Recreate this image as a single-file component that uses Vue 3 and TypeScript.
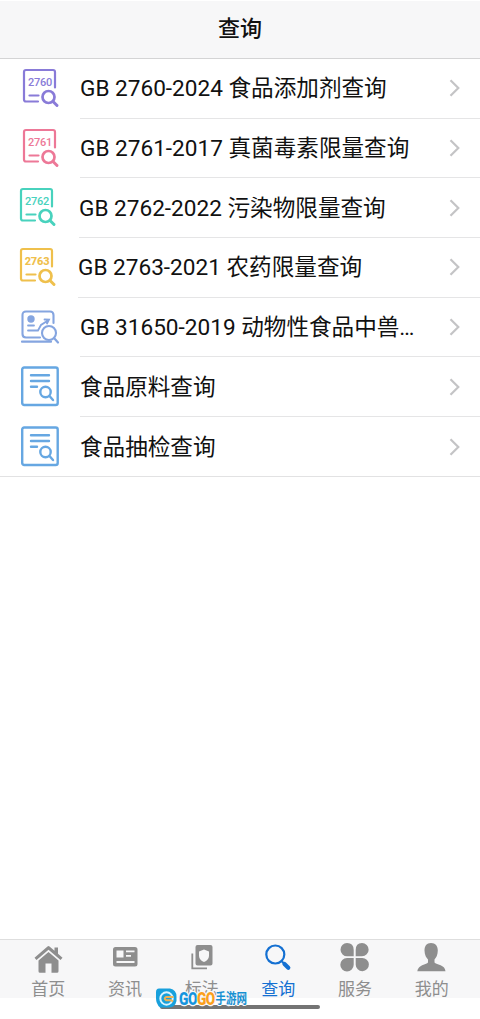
<script setup lang="ts">
interface Entry {
  label: string
  kind: 'code' | 'chart' | 'doc'
  code?: string
  color: string
  icon: number
  text: number
}

const entries: Entry[] = [
  { label: 'GB 2760-2024 食品添加剂查询', kind: 'code', code: '2760', color: '#897bd8', icon: 21, text: 80 },
  { label: 'GB 2761-2017 真菌毒素限量查询', kind: 'code', code: '2761', color: '#ed7897', icon: 21, text: 80 },
  { label: 'GB 2762-2022 污染物限量查询', kind: 'code', code: '2762', color: '#48d2bd', icon: 18, text: 79 },
  { label: 'GB 2763-2021 农药限量查询', kind: 'code', code: '2763', color: '#efc04c', icon: 18, text: 78 },
  { label: 'GB 31650-2019 动物性食品中兽…', kind: 'chart', color: '#85a5e0', icon: 20, text: 80 },
  { label: '食品原料查询', kind: 'doc', color: '#66a7e2', icon: 20, text: 80 },
  { label: '食品抽检查询', kind: 'doc', color: '#66a7e2', icon: 20, text: 80 },
]

const tabs = ['首页', '资讯', '标法', '查询', '服务', '我的']
const active = 3
</script>

<template>
  <div class="screen">
    <header class="title">查询</header>

    <main class="list">
      <div v-for="e in entries" :key="e.label" class="row">
        <div class="lead" :style="{ width: e.text + 'px', paddingLeft: e.icon + 'px', color: e.color }">
          <svg v-if="e.kind === 'code'" width="40" height="42" viewBox="0 0 40 42" fill="none" stroke="currentColor" stroke-width="2.200" stroke-linecap="round">
            <path d="M34 20.500V5Q34 3 32 3H5Q3 3 3 5V32.500Q3 34.500 5 34.500H17" />
            <path d="M8.500 28.500H17.500" />
            <circle cx="27.500" cy="30" r="6" stroke-width="2.700" />
            <path d="M32 34.500L36 38.500" stroke-width="3" />
            <text x="19" y="19.300" text-anchor="middle" class="code" :class="{ heavy: e.code === '2763' }">{{ e.code }}</text>
          </svg>
          <svg v-else-if="e.kind === 'chart'" width="40" height="42" viewBox="0 0 40 42" fill="none" stroke="currentColor" stroke-width="2.100" stroke-linecap="round">
            <path d="M33.500 17V9Q33.500 5.500 30 5.500H6Q2.500 5.500 2.500 9V28Q2.500 31.500 6 31.500H20" />
            <circle cx="11" cy="13" r="3.700" fill="currentColor" stroke="none" />
            <path d="M8 19.500H14M8 24.500H18L21 19L28 14.500M24.500 13.500L29 13.700L27 17.500" stroke-width="1.800" />
            <circle cx="29" cy="27" r="7" />
            <path d="M34 32L38 36.500M2 35.700H31" stroke-width="2.200" />
          </svg>
          <svg v-else width="40" height="42" viewBox="0 0 40 42" fill="none" stroke="currentColor" stroke-width="2.400" stroke-linecap="round">
            <rect x="2.200" y="2.500" width="35.500" height="37.500" rx="2" />
            <path d="M11 10.300H29M11 16H29M11 21.700H17" stroke-width="2.400" />
            <circle cx="25.500" cy="27" r="5.200" />
            <path d="M29.500 31L33 35" />
          </svg>
        </div>
        <div class="body">
          <span class="label">{{ e.label }}</span>
          <svg class="arrow" width="12" height="18" viewBox="0 0 12 18" fill="none" stroke="#c4c4c6" stroke-width="2.200">
            <path d="M1.500 1.200L9.300 9L1.500 16.800" />
          </svg>
        </div>
      </div>
    </main>

    <nav class="tabs">
      <div v-for="(t, i) in tabs" :key="t" class="tab" :class="{ active: i === active }">
        <svg width="32" height="32" viewBox="0 0 32 32" fill="currentColor">
          <template v-if="i === 0">
            <path d="M15.500 5.500Q16.500 4.500 17.500 5.500L22.500 9.700V6.500H26V12.700L30.500 16.700L28.500 19L16.500 8.800L4.500 19L2.500 16.700Z" />
            <path d="M16.500 11L26.500 19.500V30.200Q26.500 31.700 25 31.700H19.500V22.500H13.500V31.700H8Q6.500 31.700 6.500 30.200V19.500Z" />
          </template>
          <path v-else-if="i === 1" fill-rule="evenodd" d="M6.500 6H26Q28.500 6 28.500 8.500V23Q28.500 25.500 26 25.500H6.500Q4 25.500 4 23V8.500Q4 6 6.500 6ZM7.500 9.500V16.500H14.500V9.500ZM17 9.500V11.300H25.500V9.500ZM17 14V15.800H22V14ZM7.500 20V22H25.500V20Z" />
          <template v-else-if="i === 2">
            <path fill-rule="evenodd" d="M11.500 4H24.500Q26.500 4 26.500 6V22.500Q26.500 24.500 24.500 24.500H11.500Q9.500 24.500 9.500 22.500V6Q9.500 4 11.500 4ZM18 8.500L13 10.500V15Q13.300 19 18 21Q22.700 19 23 15V10.500Z" />
            <path d="M6.300 12.500V27.300H21" fill="none" stroke="currentColor" stroke-width="1.800" />
          </template>
          <template v-else-if="i === 3">
            <circle cx="13.300" cy="13.500" r="9" fill="none" stroke="currentColor" stroke-width="2.200" />
            <path d="M20 20.500L22 22.500" stroke="currentColor" stroke-width="2" />
            <path d="M22.500 23L26.300 26.700" stroke="currentColor" stroke-width="4.200" stroke-linecap="round" />
          </template>
          <path v-else-if="i === 4" d="M8 2Q14.700 2 14.700 9V15.300H8.300A6.650 6.650 0 0 1 8 2ZM23 2Q16.700 2 16.700 9V15.300H23A6.650 6.650 0 0 0 23 2ZM8 17H14.700V23.700A6.700 6.700 0 1 1 8 17ZM23 17H16.700V23.700A6.600 6.600 0 1 0 23 17Z" />
          <path v-else d="M15 2C10.500 2 8.500 5 8.500 9.500C8.500 14 10.500 17 12 18.500V21.500C10 23.500 5 24 3 26.500Q1.500 28 1.300 30.300H29.500Q29.200 28 28 26.500C26 24 20.500 23.500 18.500 21.500V18.500C20 17 21.800 14 21.800 9.500C21.800 5 19.500 2 15 2Z" />
        </svg>
        <span>{{ t }}</span>
      </div>
    </nav>

    <div class="home-bar"></div>
    <svg class="mark" width="100" height="26" viewBox="0 0 100 26">
      <path d="M4 1.500H15Q21.500 3 21.500 9.500V14Q20 20.500 14 20.500H5Q1 17 1 11V5Q1 1.500 4 1.500Z" fill="#18a0dc" />
      <circle cx="11.500" cy="11.500" r="6.200" fill="none" stroke="#d9f4ff" stroke-width="2" />
      <path d="M18.500 10H11Q8.500 11.500 11 13.200H16L18 14.500" fill="none" stroke="#f0b052" stroke-width="2" />
      <g transform="translate(24 17.500) scale(0.720 1)">
        <text class="latin"><tspan fill="#1594de">GO</tspan><tspan fill="#fba01c">GO</tspan></text>
      </g>
      <text x="60.500" y="16" class="han" textLength="31.500" lengthAdjust="spacingAndGlyphs">手游网</text>
    </svg>
  </div>
</template>

<style>
body {
  margin: 0;
  background: #fff;
}
</style>

<style scoped>
.screen {
  position: relative;
  display: flex;
  flex-direction: column;
  box-sizing: border-box;
  width: 480px;
  height: 1019px;
  padding-top: 1px;
  overflow: hidden;
  background: #fff;
  font-family: Roboto, "Noto Sans CJK SC", sans-serif;
}
.title {
  box-sizing: border-box;
  height: 58px;
  border-bottom: 1px solid #d4d4d5;
  background: #f7f7f8;
  color: #111;
  font-size: 22px;
  font-weight: 500;
  line-height: 55px;
  text-align: center;
}
.list {
  height: 417px;
  border-bottom: 1px solid #e2e2e3;
}
.row {
  display: flex;
  height: 59.7px;
}
.lead {
  display: flex;
  align-items: center;
  box-sizing: border-box;
  flex: none;
}
.lead svg {
  flex: none;
  margin-top: -2px;
}
.code {
  fill: currentColor;
  stroke: none;
  font-size: 11px;
  font-weight: 500;
  letter-spacing: -0.2px;
}
.heavy {
  font-weight: 800;
}
.body {
  display: flex;
  align-items: center;
  justify-content: space-between;
  flex: 1;
  min-width: 0;
  box-sizing: border-box;
  padding-right: 19px;
  border-bottom: 1px solid #e5e5e6;
}
.row:last-child .body {
  border-bottom: 0;
}
.label {
  padding-top: 2px;
  color: #111;
  font-size: 22.6px;
  line-height: 34px;
  white-space: nowrap;
}
.arrow {
  flex: none;
}
.tabs {
  display: flex;
  box-sizing: border-box;
  height: 59px;
  margin-top: auto;
  margin-bottom: 21px;
  padding: 0 10px;
  border-top: 1px solid #dedede;
  background: #f7f7f8;
}
.tab {
  display: flex;
  flex: 1;
  flex-direction: column;
  align-items: center;
  color: #8e8e8e;
  font-size: 17px;
  line-height: 24px;
}
.tab svg {
  flex: none;
  margin-top: 1px;
}
.tab span {
  margin-top: 4px;
}
.active {
  color: #1470d2;
}
.home-bar {
  position: absolute;
  left: 160px;
  top: 1005px;
  width: 160px;
  height: 4px;
  border-radius: 2px;
  background: #747474;
}
.mark {
  position: absolute;
  left: 155px;
  top: 987px;
}
.latin {
  font: 900 19px Roboto, sans-serif;
  letter-spacing: -0.6px;
  stroke: #f7f7f8;
  stroke-width: 2.5px;
  paint-order: stroke;
}
.han {
  fill: #1690d2;
  font: 700 13.5px "Noto Sans CJK SC", sans-serif;
  stroke: #f7f7f8;
  stroke-width: 2px;
  paint-order: stroke;
}
</style>
